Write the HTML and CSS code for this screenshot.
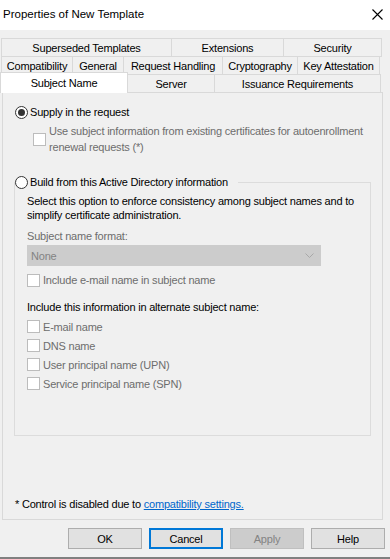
FILE: index.html
```html
<!DOCTYPE html>
<html lang="en">
<head>
    <meta charset="UTF-8">
    <meta name="viewport" content="width=device-width, initial-scale=1.0">
    <title>Properties of New Template</title>
    <link rel="stylesheet" href="styles.css">
</head>
<body>
    <div class="window">
        <div class="titlebar">
            <span class="title">Properties of New Template</span>
            <svg class="close" width="11" height="11" viewBox="0 0 11 11">
                <path d="M0.5 0.5L10.5 10.5M10.5 0.5L0.5 10.5" stroke="#000" stroke-width="1.1"/>
            </svg>
        </div>

        <div class="tabs">
            <div class="tab-row row-1">
                <div class="tab tab-superseded">Superseded Templates</div>
                <div class="tab tab-extensions">Extensions</div>
                <div class="tab tab-security">Security</div>
            </div>
            <div class="tab-row row-2">
                <div class="tab tab-compat">Compatibility</div>
                <div class="tab tab-general">General</div>
                <div class="tab tab-request">Request Handling</div>
                <div class="tab tab-crypto">Cryptography</div>
                <div class="tab tab-attest">Key Attestation</div>
            </div>
            <div class="tab-row row-3">
                <div class="tab tab-subject active">Subject Name</div>
                <div class="tab tab-server">Server</div>
                <div class="tab tab-issuance">Issuance Requirements</div>
            </div>
        </div>

        <div class="panel">
            <div class="option-row">
                <span class="radio checked"></span>
                <span>Supply in the request</span>
            </div>
            <div class="sub-check disabled">
                <span class="checkbox"></span>
                <span>Use subject information from existing certificates for autoenrollment<br>renewal requests (*)</span>
            </div>

            <fieldset class="group">
                <legend>
                    <span class="legend-inner">
                        <span class="radio"></span>
                        <span>Build from this Active Directory information</span>
                    </span>
                </legend>
                <div class="group-body">
                    <p class="intro">Select this option to enforce consistency among subject names and to<br>simplify certificate administration.</p>
                    <div class="field-label disabled">Subject name format:</div>
                    <div class="select">
                        <span>None</span>
                        <svg width="9" height="5" viewBox="0 0 9 5">
                            <path d="M0.5 0.5L4.5 4.5L8.5 0.5" fill="none" stroke="#a8a8a8" stroke-width="1"/>
                        </svg>
                    </div>
                    <div class="check-row include-email disabled">
                        <span class="checkbox"></span>
                        <span>Include e-mail name in subject name</span>
                    </div>
                    <div class="alt-label">Include this information in alternate subject name:</div>
                    <div class="alt-list">
                        <div class="check-row disabled"><span class="checkbox"></span><span>E-mail name</span></div>
                        <div class="check-row disabled"><span class="checkbox"></span><span>DNS name</span></div>
                        <div class="check-row disabled"><span class="checkbox"></span><span>User principal name (UPN)</span></div>
                        <div class="check-row disabled"><span class="checkbox"></span><span>Service principal name (SPN)</span></div>
                    </div>
                </div>
            </fieldset>

            <p class="footnote">* Control is disabled due to <a href="#">compatibility settings.</a></p>
        </div>

        <div class="buttons">
            <button class="btn">OK</button>
            <button class="btn default">Cancel</button>
            <button class="btn" disabled>Apply</button>
            <button class="btn">Help</button>
        </div>
        <div class="window-edge"></div>
    </div>
</body>
</html>
```

FILE: styles.css
```css
body {
    margin: 0;
    background-color: #f0f0f0;
    font-family: 'Liberation Sans', Arial, sans-serif;
    font-size: 11px;
    letter-spacing: -0.2px;
    color: #000000;
}
.window {
    width: 390px;
    height: 559px;
    overflow: hidden;
}
.titlebar {
    height: 30px;
    box-sizing: border-box;
    background: #ffffff;
    display: flex;
    align-items: center;
    justify-content: space-between;
    padding: 0 7px 2px 3px;
}
.title {
    font-size: 11.5px;
    letter-spacing: 0;
}
.tabs {
    margin-top: 8px;
}
.tab-row {
    display: flex;
}
.row-1 {
    margin-left: 1px;
}
.row-2 {
    margin-left: 1px;
    margin-top: -1px;
}
.row-3 {
    margin-top: -3px;
    height: 21px;
    align-items: flex-end;
}
.tab {
    height: 19px;
    box-sizing: border-box;
    border: 1px solid #d9d9d9;
    background: #f0f0f0;
    display: flex;
    align-items: center;
    justify-content: center;
    margin-left: -1px;
    white-space: nowrap;
}
.tab:first-child {
    margin-left: 0;
}
.tab.active {
    height: 21px;
    background: #ffffff;
    border-bottom: none;
    position: relative;
    z-index: 1;
}
.tab-superseded { width: 171px; }
.tab-extensions { width: 113px; }
.tab-security { width: 99px; }
.tab-compat { width: 72px; }
.tab-general { width: 52px; }
.tab-request { width: 100px; }
.tab-crypto { width: 76px; }
.tab-attest { width: 83px; }
.tab-subject { width: 128px; }
.tab-server { width: 88px; }
.tab-issuance { width: 167px; }

.panel {
    margin: -1px 0 0 2px;
    width: 381px;
    box-sizing: border-box;
    border: 1px solid #d9d9d9;
    padding: 11px 0 7px;
    background: #f0f0f0;
}
.disabled {
    color: #6d6d6d;
}
.radio {
    width: 13px;
    height: 13px;
    box-sizing: border-box;
    border: 1px solid #333333;
    border-radius: 50%;
    background: #ffffff;
    display: flex;
    align-items: center;
    justify-content: center;
    flex: none;
}
.radio.checked::after {
    content: '';
    width: 7px;
    height: 7px;
    border-radius: 50%;
    background: #333333;
}
.checkbox {
    width: 13px;
    height: 13px;
    box-sizing: border-box;
    border: 1px solid #bcbcbc;
    background: #ffffff;
    flex: none;
}
.option-row {
    display: flex;
    align-items: center;
    gap: 2px;
    height: 16px;
    padding-left: 12px;
}
.sub-check {
    margin-top: 3px;
    padding-left: 30px;
    display: flex;
    align-items: center;
    gap: 3px;
    line-height: 16px;
}
.group {
    margin: 19px 11px 0 11px;
    padding: 0;
    border: 1px solid #dcdcdc;
    min-width: 0;
}
.group legend {
    padding: 0 10px 0 0;
    margin: 0;
}
.legend-inner {
    display: flex;
    align-items: center;
    gap: 2px;
    height: 16px;
}
.group-body {
    padding: 4px 12px 42px;
}
.intro {
    margin: 0;
    line-height: 14px;
    white-space: nowrap;
}
.field-label {
    margin-top: 6px;
    line-height: 16px;
}
.select {
    margin-top: 1px;
    width: 294px;
    height: 21px;
    box-sizing: border-box;
    background: #cccccc;
    border: 1px solid #cccccc;
    color: #838383;
    display: flex;
    align-items: center;
    justify-content: space-between;
    padding: 0 6px 0 3px;
}
.check-row {
    display: flex;
    align-items: center;
    gap: 3px;
    height: 16px;
}
.include-email {
    margin-top: 6px;
}
.alt-label {
    margin-top: 11px;
    line-height: 16px;
}
.alt-list {
    margin-top: 2px;
}
.alt-list .check-row {
    height: 19px;
}
.footnote {
    margin: 60px 0 0;
    padding-left: 12px;
    line-height: 16px;
}
.footnote a {
    color: #0066cc;
}
.buttons {
    display: flex;
    justify-content: flex-end;
    gap: 7px;
    padding-right: 5px;
    margin-top: 8px;
}
.btn {
    width: 74px;
    height: 21px;
    box-sizing: border-box;
    background: #e1e1e1;
    border: 1px solid #adadad;
    font-family: inherit;
    font-size: 11px;
    letter-spacing: -0.2px;
    color: #000000;
    padding: 0;
}
.btn.default {
    border: 2px solid #0078d7;
}
.btn:disabled {
    background: #cccccc;
    border-color: #bfbfbf;
    color: #838383;
}
.window-edge {
    margin-top: 8px;
    height: 2px;
    background: #808080;
}
```
